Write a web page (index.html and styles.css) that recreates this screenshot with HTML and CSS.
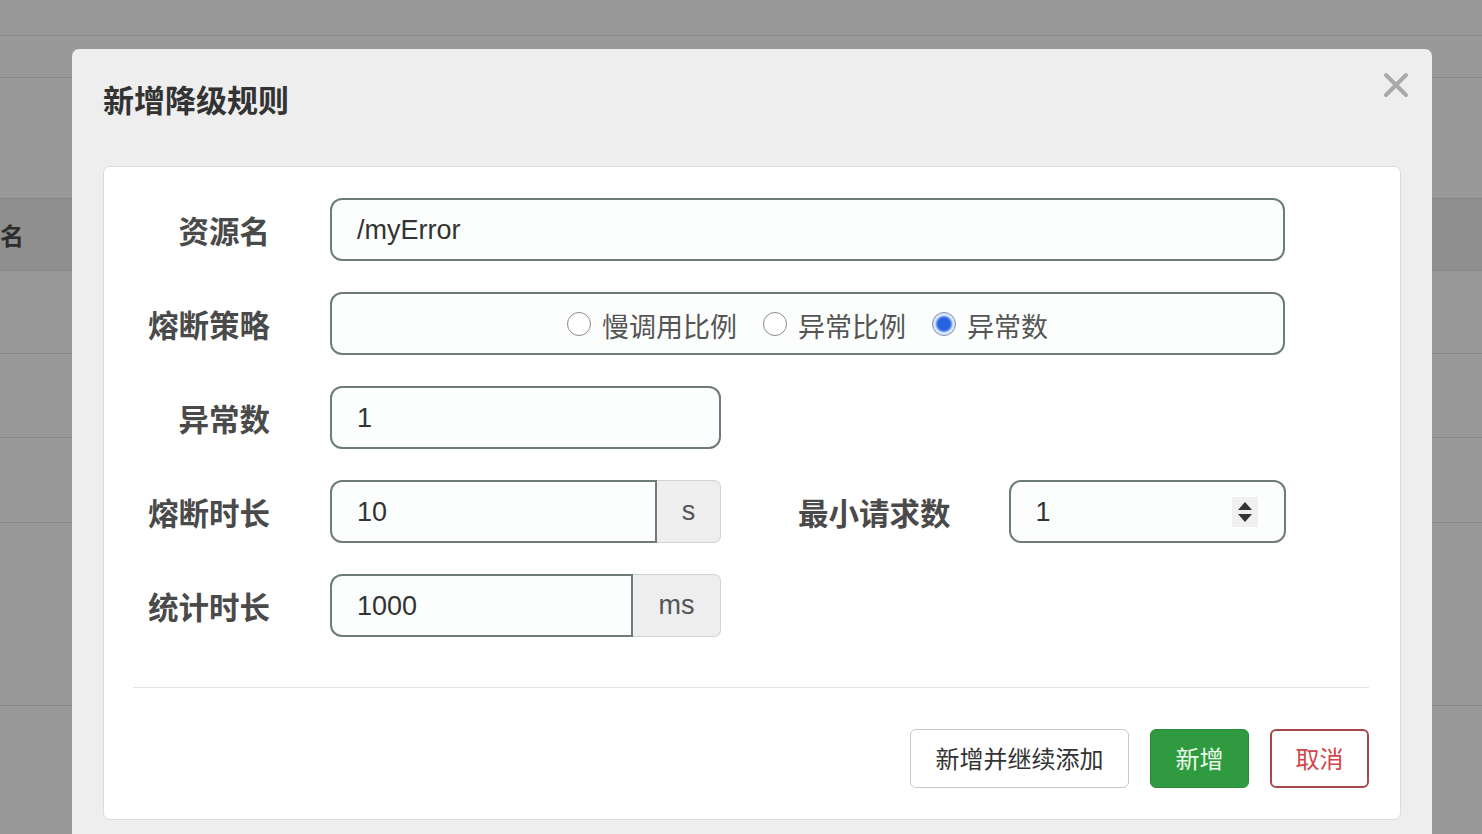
FILE: index.html
```html
<!DOCTYPE html>
<html lang="zh-CN">
<head>
<meta charset="utf-8">
<title>新增降级规则</title>
<link rel="stylesheet" href="styles.css">
</head>
<body>
<div class="backdrop">
  <div class="bg-row r1"></div>
  <div class="bg-row r2"></div>
  <div class="bg-row r3"></div>
  <div class="bg-row r4 head"><span class="bg-cell">名</span></div>
  <div class="bg-row r5"></div>
  <div class="bg-row r6"></div>
  <div class="bg-row r7"></div>
  <div class="bg-row r8"></div>
  <div class="bg-row r9"></div>
</div>

<div class="overlay">
  <div class="modal">
    <div class="modal-header">
      <h4 class="modal-title">新增降级规则</h4>
      <button class="close" type="button" aria-label="关闭">
        <svg width="26" height="26" viewBox="0 0 26 26"><path d="M3 3 L23 23 M23 3 L3 23" stroke="#a9a9a9" stroke-width="4" stroke-linecap="round" fill="none"/></svg>
      </button>
    </div>
    <div class="panel">
      <div class="form-row">
        <label class="label">资源名</label>
        <div class="control full"><span class="val">/myError</span></div>
      </div>
      <div class="form-row">
        <label class="label">熔断策略</label>
        <div class="control full radios">
          <span class="radio-item"><span class="radio"></span>慢调用比例</span>
          <span class="radio-item"><span class="radio"></span>异常比例</span>
          <span class="radio-item"><span class="radio checked"></span>异常数</span>
        </div>
      </div>
      <div class="form-row">
        <label class="label">异常数</label>
        <div class="control half"><span class="val">1</span></div>
      </div>
      <div class="form-row">
        <label class="label">熔断时长</label>
        <div class="group half">
          <div class="control grouped"><span class="val">10</span></div>
          <span class="addon addon-s">s</span>
        </div>
        <label class="label label2">最小请求数</label>
        <div class="control spin"><span class="val">1</span>
          <span class="spinner"><svg width="16" height="24" viewBox="0 0 16 24"><path d="M8 2 L15 10 L1 10 Z M1 14 L15 14 L8 22 Z" fill="#333"/></svg></span>
        </div>
      </div>
      <div class="form-row">
        <label class="label">统计时长</label>
        <div class="group half">
          <div class="control grouped"><span class="val">1000</span></div>
          <span class="addon addon-ms">ms</span>
        </div>
      </div>
      <div class="divider"></div>
      <div class="footer">
        <button class="btn btn-default" type="button">新增并继续添加</button>
        <button class="btn btn-success" type="button">新增</button>
        <button class="btn btn-cancel" type="button">取消</button>
      </div>
    </div>
  </div>
</div>
</body>
</html>
```

FILE: styles.css
```css
html, body {
  margin: 0;
  padding: 0;
  width: 1482px;
  height: 834px;
  overflow: hidden;
}
body {
  background: #999999;
  font-family: "Liberation Sans", "Noto Sans CJK SC", sans-serif;
  position: relative;
}
.backdrop {
  display: flex;
  flex-direction: column;
}
.bg-row {
  border-bottom: 1px solid #878787;
  box-sizing: border-box;
  display: flex;
  align-items: center;
}
.r1 { height: 36px; }
.r2 { height: 42px; }
.r3 { height: 121px; }
.r4 { height: 72px; background: #8f8f8f; }
.r5 { height: 83px; }
.r6 { height: 84px; }
.r7 { height: 85px; }
.r8 { height: 183px; }
.r9 { height: 140px; border-bottom: none; }
.bg-cell {
  font-family: "Noto Sans CJK SC", sans-serif;
  font-weight: 700;
  font-size: 24px;
  color: #2e2e2e;
  margin-left: 0;
}

.overlay {
  position: absolute;
  left: 0;
  top: 0;
  right: 0;
  bottom: 0;
  padding: 49px 0 0 72px;
}
.modal {
  width: 1360px;
  background: #eeeeee;
  border-radius: 7px;
  padding: 0 31px 40px 31px;
  box-sizing: border-box;
}
.modal-header {
  height: 117px;
  display: flex;
  align-items: flex-start;
  justify-content: space-between;
}
.modal-title {
  margin: 32px 0 0 0;
  font-family: "Noto Sans CJK SC", sans-serif;
  font-weight: 700;
  font-size: 31px;
  line-height: 36px;
  color: #333;
}
.close {
  margin: 23px -8px 0 0;
  padding: 0;
  border: none;
  background: none;
  width: 26px;
  height: 26px;
  display: flex;
}
.panel {
  background: #fff;
  border: 1px solid #dcdcdc;
  border-radius: 7px;
  padding: 31px 32px 30px 29px;
  box-sizing: border-box;
  height: 654px;
  display: flex;
  flex-direction: column;
  gap: 31px;
}
.form-row {
  display: flex;
  align-items: center;
  height: 63px;
}
.label {
  flex: 0 0 137px;
  margin-right: 60px;
  text-align: right;
  font-family: "Noto Sans CJK SC", sans-serif;
  font-weight: 700;
  font-size: 30.5px;
  color: #4a4a4a;
  line-height: 40px;
  white-space: nowrap;
}
.label2 {
  flex: 0 0 auto;
  margin: 0 58px 0 77px;
  text-align: left;
}
.control {
  height: 63px;
  box-sizing: border-box;
  border: 2px solid #6e7b7b;
  border-radius: 12px;
  background: #fcfefe;
  display: flex;
  align-items: center;
  padding: 0 25px;
  font-size: 27px;
  color: #333;
}
.full { width: 955px; }
.half { width: 391px; }
.val { line-height: 32px; }
.radios {
  justify-content: center;
  gap: 26px;
  font-family: "Noto Sans CJK SC", sans-serif;
  font-size: 27px;
  color: #555;
  padding-top: 4px;
}
.radio-item {
  display: flex;
  align-items: center;
  gap: 11px;
  line-height: 36px;
}
.radio {
  width: 24px;
  height: 24px;
  box-sizing: border-box;
  border: 1.5px solid #8a8a8a;
  border-radius: 50%;
  background: #fff;
  margin-top: -4px;
}
.radio.checked {
  border: 1.5px solid #7a8aa8;
  background: radial-gradient(circle, #2563e0 0, #2563e0 6px, #6f9bf0 7.5px, #dce8fc 9px, #dce8fc 11px);
}
.group {
  display: flex;
  height: 63px;
}
.grouped {
  flex: 1 1 auto;
  border-radius: 12px 0 0 12px;
}
.addon {
  background: #eeeeee;
  border: 1px solid #d3d3d3;
  border-left: none;
  border-radius: 0 7px 7px 0;
  display: flex;
  align-items: center;
  justify-content: center;
  font-size: 27px;
  color: #555;
  box-sizing: border-box;
  height: 63px;
}
.addon-s { flex: 0 0 64px; }
.addon-ms { flex: 0 0 88px; }
.spin {
  width: 277px;
  justify-content: space-between;
  padding: 0 26px 0 25px;
}
.spinner {
  width: 26px;
  height: 30px;
  background: #f0f0f0;
  display: flex;
  align-items: center;
  justify-content: center;
}
.divider {
  height: 1px;
  background: #e3e3e3;
  margin: 19px -1px 0 0;
}
.footer {
  display: flex;
  justify-content: flex-end;
  gap: 21px;
  margin-top: 10px;
  margin-right: -1px;
}
.btn {
  height: 59px;
  box-sizing: border-box;
  border-radius: 6px;
  font-family: "Noto Sans CJK SC", sans-serif;
  font-size: 24px;
  padding: 0 0 3px 0;
  display: flex;
  align-items: center;
  justify-content: center;
}
.btn-default {
  width: 219px;
  background: #fff;
  border: 1px solid #c8c8c8;
  color: #333;
}
.btn-success {
  width: 99px;
  background: #2f9a3f;
  border: 1px solid #2a8c38;
  color: #eafbe9;
}
.btn-cancel {
  width: 99px;
  background: #fff;
  border: 2px solid #a5494b;
  color: #d0474c;
}
```
